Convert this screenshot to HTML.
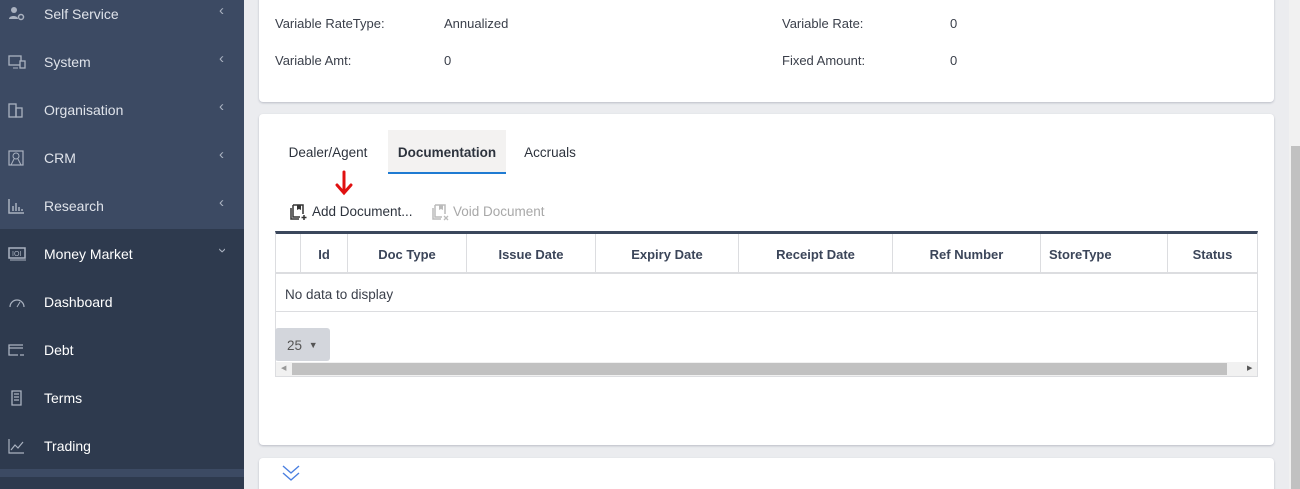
<!DOCTYPE html>
<html><head><style>
*{margin:0;padding:0;box-sizing:border-box}
html,body{width:1300px;height:489px;overflow:hidden}
body{background:#ebecef;font-family:"Liberation Sans",sans-serif;position:relative}
.sb{position:absolute;left:0;top:0;width:244px;height:489px;background:#2e3a4e}
.sbtop{position:absolute;left:0;top:0;width:244px;height:229px;background:#3c4a63}
.item{position:absolute;left:0;width:244px;height:48px;color:#dfe3ea;font-size:14px}
.item .ic{position:absolute;left:8px;top:16px;width:18px;height:16px}
.item .t{position:absolute;left:44px;top:16px}
.item .ch{position:absolute;left:219px;top:12px;font-size:15px;color:#aab2c0}
.card{position:absolute;left:259px;width:1015px;background:#fff;border-radius:4px;box-shadow:0 1px 2px #b9bcc6}
.lab{position:absolute;font-size:13px;color:#3a3f4a}
.tab{position:absolute;top:130px;height:44px;font-size:13.5px;color:#2d333d;line-height:45px;text-align:center}
.hd{position:absolute;top:234px;height:39px;font-weight:bold;color:#3b4559;font-size:13px;line-height:41px;text-align:center;border-right:1px solid #dcdde0}
</style></head><body>
<div class="sb"></div><div class="sbtop"></div>
<div style="position:absolute;left:0;top:469px;width:244px;height:8px;background:#3c4a63"></div>

<div class="item" style="top:-10px"><svg class="ic" viewBox="0 0 18 16"><circle cx="6" cy="4" r="3" fill="#aab2c0"/><path d="M1 13c0-4 9-4 9 0z" fill="#aab2c0"/><circle cx="13" cy="11" r="2.5" fill="none" stroke="#aab2c0" stroke-width="1.5"/></svg><span class="t">Self Service</span><span class="ch">&lsaquo;</span></div>
<div class="item" style="top:38px"><svg class="ic" viewBox="0 0 18 16"><rect x="1" y="2" width="12" height="9" fill="none" stroke="#aab2c0" stroke-width="1.3"/><rect x="12" y="7" width="5" height="7" fill="#3c4a63" stroke="#aab2c0" stroke-width="1.3"/><path d="M5 14h5" stroke="#aab2c0"/></svg><span class="t">System</span><span class="ch">&lsaquo;</span></div>
<div class="item" style="top:86px"><svg class="ic" viewBox="0 0 18 16"><rect x="1" y="2" width="7" height="13" fill="none" stroke="#aab2c0" stroke-width="1.3"/><rect x="8" y="6" width="6" height="9" fill="none" stroke="#aab2c0" stroke-width="1.3"/></svg><span class="t">Organisation</span><span class="ch">&lsaquo;</span></div>
<div class="item" style="top:134px"><svg class="ic" viewBox="0 0 18 16"><rect x="1" y="1" width="14" height="14" fill="none" stroke="#aab2c0" stroke-width="1.2"/><circle cx="8" cy="6" r="3" fill="none" stroke="#aab2c0"/><path d="M3 15l3-6M13 15l-3-6" stroke="#aab2c0"/></svg><span class="t">CRM</span><span class="ch">&lsaquo;</span></div>
<div class="item" style="top:182px"><svg class="ic" viewBox="0 0 18 16"><path d="M1 1v14h15M5 8v5M8 5v8M11 9v4M14 11v2" stroke="#aab2c0" stroke-width="1.5" fill="none"/></svg><span class="t">Research</span><span class="ch">&lsaquo;</span></div>
<div class="item" style="top:230px;color:#fff"><svg class="ic" viewBox="0 0 18 16"><rect x="1" y="2" width="16" height="10" fill="none" stroke="#aab2c0" stroke-width="1.5"/><path d="M2 14h16" stroke="#aab2c0"/><text x="4" y="10" font-size="7" fill="#aab2c0">IOI</text></svg><span class="t">Money Market</span><span class="ch" style="transform:rotate(-90deg)">&lsaquo;</span></div>
<div class="item" style="top:278px;color:#fff"><svg class="ic" viewBox="0 0 18 16"><path d="M2 13a7 7 0 1 1 14 0" fill="none" stroke="#aab2c0" stroke-width="1.2"/><path d="M9 13l3-5" stroke="#aab2c0"/></svg><span class="t">Dashboard</span></div>
<div class="item" style="top:326px;color:#fff"><svg class="ic" viewBox="0 0 18 16"><path d="M15 3H1v10h9M1 6h14M12 13h4" fill="none" stroke="#aab2c0" stroke-width="1.3"/></svg><span class="t">Debt</span></div>
<div class="item" style="top:374px;color:#fff"><svg class="ic" viewBox="0 0 18 16"><path d="M4 1h9v14H4zM6 4h5M6 7h5M6 10h5" fill="none" stroke="#aab2c0" stroke-width="1.3"/></svg><span class="t">Terms</span></div>
<div class="item" style="top:422px;color:#fff"><svg class="ic" viewBox="0 0 18 16"><path d="M1 1v14h15M3 12l4-5 3 3 5-6" fill="none" stroke="#aab2c0" stroke-width="1.2"/></svg><span class="t">Trading</span></div>

<div class="card" style="top:-5px;height:107px"></div>
<span class="lab" style="left:275px;top:16px">Variable RateType:</span>
<span class="lab" style="left:444px;top:16px">Annualized</span>
<span class="lab" style="left:782px;top:16px">Variable Rate:</span>
<span class="lab" style="left:950px;top:16px">0</span>
<span class="lab" style="left:275px;top:53px">Variable Amt:</span>
<span class="lab" style="left:444px;top:53px">0</span>
<span class="lab" style="left:782px;top:53px">Fixed Amount:</span>
<span class="lab" style="left:950px;top:53px">0</span>

<div class="card" style="top:114px;height:331px"></div>
<div class="tab" style="left:278px;width:100px">Dealer/Agent</div>
<div class="tab" style="left:388px;width:118px;background:#f3f2f1;border-bottom:2px solid #1f7bd2;font-weight:bold">Documentation</div>
<div class="tab" style="left:516px;width:68px">Accruals</div>
<svg style="position:absolute;left:332px;top:170px" width="24" height="28" viewBox="0 0 24 28"><path d="M12 2v20M5 15l7 8 7-8" fill="none" stroke="#e01010" stroke-width="3" stroke-linecap="round"/></svg>
<svg style="position:absolute;left:289px;top:202px" width="19" height="19" viewBox="0 0 19 19"><path d="M4 3h10v9M4 3v12h7M2 6v11h8" fill="none" stroke="#333" stroke-width="1.5"/><path d="M8 3v5l2-1 2 1V3" fill="#333"/><path d="M15 13v5M12.5 15.5h5" stroke="#333" stroke-width="1.5"/></svg>
<span style="position:absolute;left:312px;top:204px;font-size:13.5px;color:#2d333d">Add Document...</span>
<svg style="position:absolute;left:431px;top:202px" width="19" height="19" viewBox="0 0 19 19"><path d="M4 3h10v9M4 3v12h7M2 6v11h8" fill="none" stroke="#bbb" stroke-width="1.5"/><path d="M8 3v5l2-1 2 1V3" fill="#bbb"/><path d="M13 14l4 4M17 14l-4 4" stroke="#bbb" stroke-width="1.3"/></svg>
<span style="position:absolute;left:453px;top:204px;font-size:13.5px;color:#a8a8a8">Void Document</span>

<div style="position:absolute;left:275px;top:231px;width:983px;height:146px;border:1px solid #dcdde0;border-top:3px solid #3b475c;background:#fff"></div>
<div style="position:absolute;left:276px;top:272px;width:981px;height:2px;background:#dcdde0"></div>
<div style="position:absolute;left:276px;top:311px;width:981px;height:1px;background:#dcdde0"></div>
<div class="hd" style="left:276px;width:25px"></div>
<div class="hd" style="left:301px;width:47px">Id</div>
<div class="hd" style="left:348px;width:119px">Doc Type</div>
<div class="hd" style="left:467px;width:129px">Issue Date</div>
<div class="hd" style="left:596px;width:143px">Expiry Date</div>
<div class="hd" style="left:739px;width:154px">Receipt Date</div>
<div class="hd" style="left:893px;width:148px">Ref Number</div>
<div class="hd" style="left:1041px;width:127px;text-align:left;padding-left:8px">StoreType</div>
<div class="hd" style="left:1168px;width:89px;border-right:none">Status</div>
<span style="position:absolute;left:285px;top:287px;font-size:13.5px;color:#3a3f4a">No data to display</span>
<div style="position:absolute;left:275px;top:328px;width:55px;height:33px;background:#d3d6dc;border-radius:3px;font-size:13.5px;color:#555;padding:10px 0 0 12px">25 <span style="font-size:9px;vertical-align:2px;margin-left:3px">&#9660;</span></div>
<div style="position:absolute;left:276px;top:362px;width:981px;height:14px;background:#f1f1f1"></div>
<div style="position:absolute;left:292px;top:363px;width:935px;height:12px;background:#c1c1c1"></div>
<span style="position:absolute;left:281px;top:364px;font-size:7px;color:#999">&#9664;</span>
<span style="position:absolute;left:1247px;top:364px;font-size:7px;color:#555">&#9654;</span>

<div class="card" style="top:458px;height:40px"></div>
<svg style="position:absolute;left:281px;top:464px" width="20" height="18" viewBox="0 0 20 18"><path d="M2 2l8 7 8-7M2 9l8 7 8-7" fill="none" stroke="#4a7fe0" stroke-width="1.4"/></svg>

<div style="position:absolute;left:1289px;top:0;width:11px;height:489px;background:#f1f1f1"></div>
<div style="position:absolute;left:1291px;top:146px;width:9px;height:343px;background:#c1c1c1"></div>
</body></html>
